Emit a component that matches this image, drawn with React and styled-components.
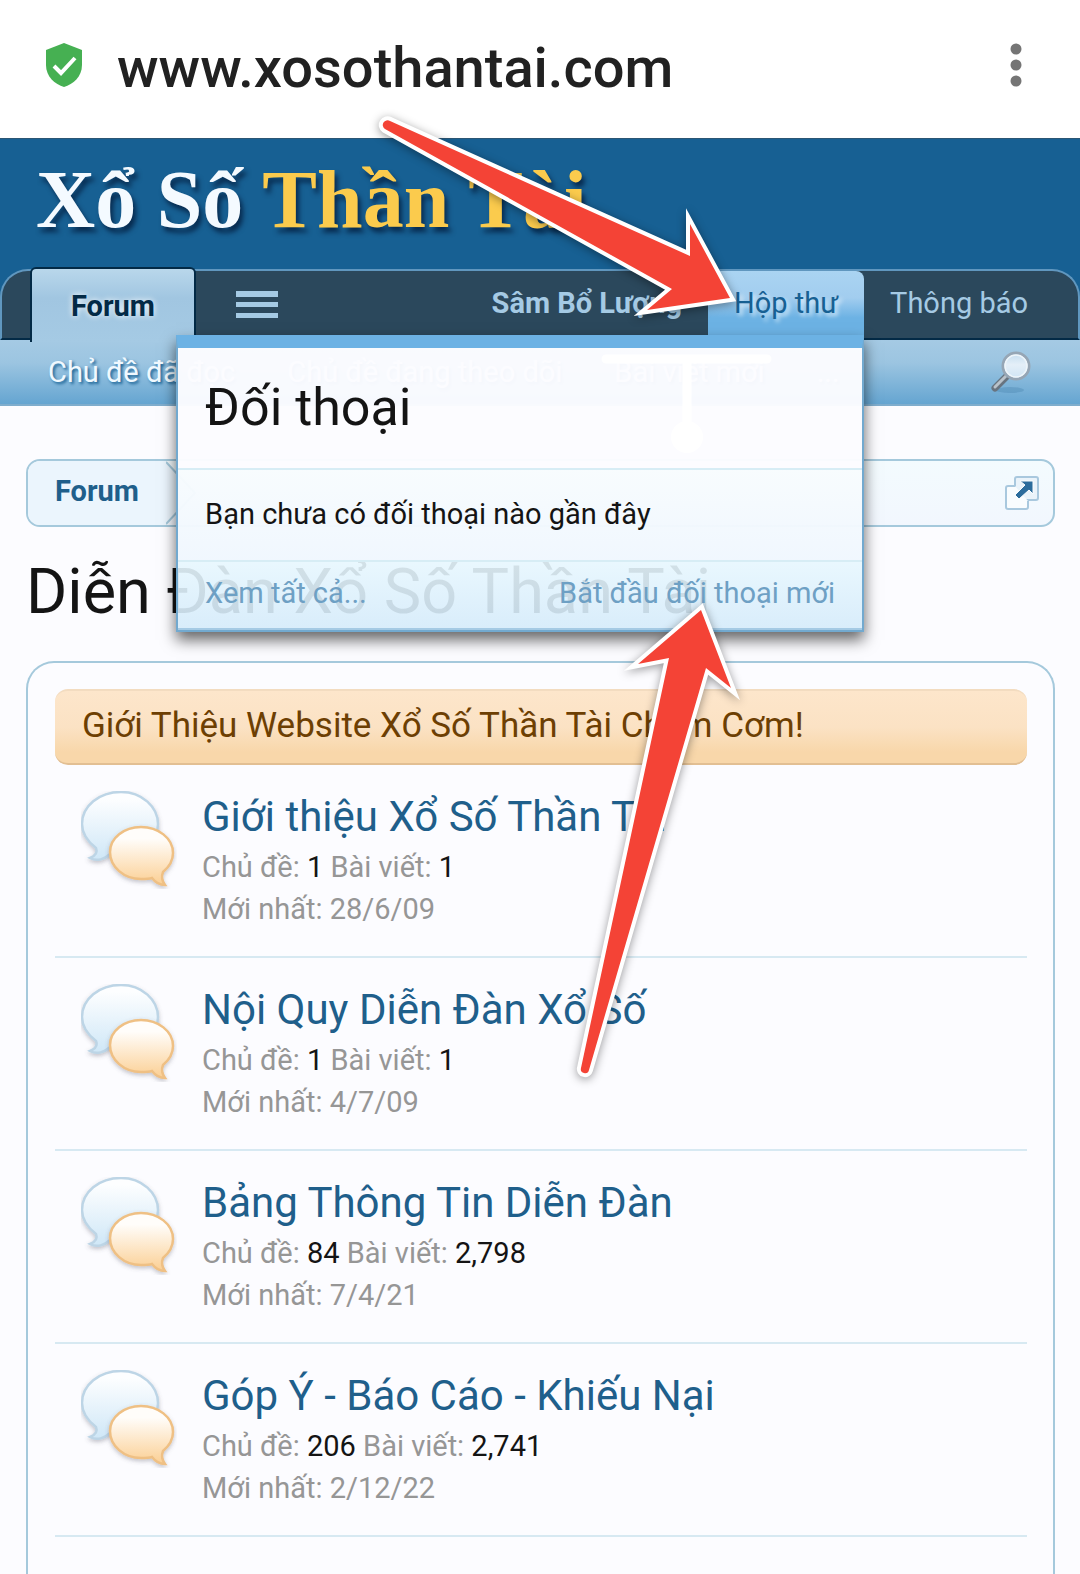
import React from 'react'
import styled, { createGlobalStyle } from 'styled-components'

const forums = [
	{ title: 'Giới thiệu Xổ Số Thần Tài', topics: '1', posts: '1', latest: '28/6/09' },
	{ title: 'Nội Quy Diễn Đàn Xổ Số', topics: '1', posts: '1', latest: '4/7/09' },
	{ title: 'Bảng Thông Tin Diễn Đàn', topics: '84', posts: '2,798', latest: '7/4/21' },
	{ title: 'Góp Ý - Báo Cáo - Khiếu Nại', topics: '206', posts: '2,741', latest: '2/12/22' },
]

const subLinks = ['Chủ đề đã đọc', 'Chủ đề đang theo dõi', 'Bài viết mới', '...']

const ShieldIcon = () => (
	<svg width='36' height='44' viewBox='0 0 36 44' aria-hidden='true'>
		<path d='M18 0 36 7v15c0 12-9 19-18 22C9 41 0 34 0 22V7z' fill='#46b052' />
		<path d='m8 23 7 7 14-15' fill='none' stroke='#fff' strokeWidth='4' />
	</svg>
)

const DotsIcon = () => (
	<svg width='12' height='44' viewBox='0 0 12 44' fill='#757575' aria-hidden='true'>
		<circle cx='6' cy='6' r='5.5' />
		<circle cx='6' cy='22' r='5.5' />
		<circle cx='6' cy='38' r='5.5' />
	</svg>
)

const MenuIcon = () => (
	<svg width='42' height='28' viewBox='0 0 42 28' fill='#a5cae4' aria-hidden='true'>
		<path d='M0 0h42v6H0zM0 11h42v5H0zM0 22h42v5H0z' />
	</svg>
)

const SearchIcon = () => (
	<svg width='42' height='44' viewBox='0 0 42 44' aria-hidden='true'>
		<defs>
			<linearGradient id='lens' x1='0' y1='0' x2='0' y2='1'>
				<stop offset='0' stopColor='#c3dcef' />
				<stop offset='0.45' stopColor='#e4eff8' />
				<stop offset='1' stopColor='#cfe4f4' />
			</linearGradient>
		</defs>
		<ellipse cx='20' cy='40' rx='14' ry='3' fill='#3f7ba6' opacity='0.3' />
		<path d='M17 26 5 38' stroke='#687480' strokeWidth='7' strokeLinecap='round' />
		<path d='M16 26 5 37' stroke='#b9c2ca' strokeWidth='3' strokeLinecap='round' />
		<circle cx='26' cy='16' r='13' fill='url(#lens)' stroke='#96a6b5' strokeWidth='3' />
		<circle cx='26' cy='16' r='11' fill='none' stroke='#eef5fa' strokeWidth='1.5' />
	</svg>
)

const JumpIcon = () => (
	<svg width='34' height='36' viewBox='0 0 34 36' aria-hidden='true'>
		<path d='M12 2h19q2 0 2 2v19q0 2-2 2H12q-2 0-2-2V4q0-2 2-2z' fill='#eaf3fa' stroke='#a9c8de' strokeWidth='2' />
		<path d='M10 11H3q-2 0-2 2v19q0 2 2 2h18q2 0 2-2v-6' fill='#f9fcfe' stroke='#a9c8de' strokeWidth='2' />
		<path d='M15 6h13v13l-4-4-10 9-4-4 10-10z' fill='#2c6c9c' stroke='#f9fcfe' strokeWidth='1' />
	</svg>
)

const BubblesIcon = () => (
	<svg width='96' height='98' viewBox='0 0 96 98' aria-hidden='true'>
		<defs>
			<linearGradient id='blueBubble' x1='0' y1='0' x2='0' y2='1'>
				<stop offset='0.1' stopColor='#fdfeff' />
				<stop offset='1' stopColor='#cfe7f7' />
			</linearGradient>
			<linearGradient id='orangeBubble' x1='0' y1='0' x2='0' y2='1'>
				<stop offset='0.2' stopColor='#fffdfa' />
				<stop offset='1' stopColor='#fbcf93' />
			</linearGradient>
			<filter id='bubbleShadow' x='-20%' y='-20%' width='140%' height='140%'>
				<feDropShadow dx='0' dy='2' stdDeviation='2' floodColor='#556' floodOpacity='0.35' />
			</filter>
		</defs>
		<path
			d='M40 1C18 1 1 15 1 33c0 10 5 17 14 24 2 5-1 8-6 10 7 4 15 1 20-4 3 1 7 1 11 1 21 0 37-14 37-31S61 1 40 1z'
			fill='url(#blueBubble)'
			stroke='#bdd5e6'
			strokeWidth='2.5'
			filter='url(#bubbleShadow)'
		/>
		<path
			d='M60 36c-17 0-31 11-31 25 0 15 14 27 31 27 4 0 8 0 11-1 3 4 7 7 13 7-3-4-4-8-2-13 6-5 10-12 10-19 0-15-15-26-32-26z'
			fill='url(#orangeBubble)'
			stroke='#efc084'
			strokeWidth='2.5'
			filter='url(#bubbleShadow)'
		/>
	</svg>
)

const ForumRow = ({ title, topics, posts, latest }) => (
	<Row>
		<BubblesIcon />
		<RowText>
			<RowTitle>
				<a href='#forum'>{title}</a>
			</RowTitle>
			<Stat>
				Chủ đề: <b>{topics}</b> Bài viết: <b>{posts}</b>
			</Stat>
			<Stat>Mới nhất: {latest}</Stat>
		</RowText>
	</Row>
)

export default function App() {
	return (
		<Page>
			<GlobalStyle />
			<BrowserBar>
				<ShieldIcon />
				<Address>www.xosothantai.com</Address>
				<IconButton type='button' aria-label='Menu'>
					<DotsIcon />
				</IconButton>
			</BrowserBar>

			<Header>
				<Logo href='#home'>
					Xổ Số <span>Thần Tài</span>
				</Logo>
				<NavBar>
					<ForumTab href='#forum'>Forum</ForumTab>
					<MenuButton type='button' aria-label='Danh mục'>
						<MenuIcon />
					</MenuButton>
					<NavLink href='#account' $bold>
						Sâm Bổ Lượng
					</NavLink>
					<Inbox>
						<InboxTab href='#inbox'>Hộp thư</InboxTab>
						<Popup>
							<PopupHead>
								<h3>Đối thoại</h3>
								<DragMark viewBox='0 0 172 104' aria-hidden='true'>
									<path d='M5 6h161M86 6v76' stroke='#fff' strokeWidth='9' strokeLinecap='round' />
									<circle cx='86' cy='84' r='16' fill='#fff' />
								</DragMark>
							</PopupHead>
							<PopupBody>Bạn chưa có đối thoại nào gần đây</PopupBody>
							<PopupFoot>
								<a href='#all'>Xem tất cả...</a>
								<a href='#new'>Bắt đầu đối thoại mới</a>
							</PopupFoot>
						</Popup>
					</Inbox>
					<NavLink href='#alerts'>Thông báo</NavLink>
				</NavBar>
				<SubNav>
					{subLinks.map(link => (
						<a href='#sub' key={link}>
							{link}
						</a>
					))}
					<IconButton type='button' aria-label='Tìm kiếm'>
						<SearchIcon />
					</IconButton>
				</SubNav>
			</Header>

			<Content>
				<Breadcrumb>
					<Crumb href='#forum'>Forum</Crumb>
					<CrumbArrow width='30' height='64' viewBox='0 0 30 64' aria-hidden='true'>
						<path d='M0 0 29 32 0 64z' fill='#ebf5fd' />
						<path d='M0 1 29 32 0 63' fill='none' stroke='#a5c9dc' strokeWidth='2' />
					</CrumbArrow>
					<IconButton type='button' aria-label='Mở nhanh'>
						<JumpIcon />
					</IconButton>
				</Breadcrumb>
				<PageTitle>Diễn Đàn Xổ Số Thần Tài</PageTitle>
				<Board>
					<Category>Giới Thiệu Website Xổ Số Thần Tài Chấm Cơm!</Category>
					<RowList>
						{forums.map(forum => (
							<ForumRow key={forum.title} {...forum} />
						))}
					</RowList>
				</Board>
			</Content>

			<Arrow $top={100} $left={360} width='400' height='240' viewBox='360 100 400 240' aria-hidden='true'>
				<path d='M390 121 690 256V224L730 298 647 310 672 289 385 129A4 4 0 0 1 390 121z' />
			</Arrow>
			<Arrow $top={590} $left={560} width='210' height='510' viewBox='560 590 210 510' aria-hidden='true'>
				<path d='M701 610 638 664 669 658 581 1068A4 4 0 0 0 589 1070L706 668 731 688z' />
			</Arrow>
		</Page>
	)
}

const GlobalStyle = createGlobalStyle`
	* {
		box-sizing: border-box;
	}
	body {
		margin: 0;
		background: #fcfcff;
		color: #141414;
		font: 29px/42px Roboto, 'Noto Sans', sans-serif;
	}
	a {
		color: inherit;
		text-decoration: none;
	}
	h1,
	h2,
	h3,
	p,
	ul {
		margin: 0;
		padding: 0;
		font-weight: 400;
	}
`

const Page = styled.div`
	position: relative;
	display: flex;
	flex-direction: column;
	min-height: 100vh;
`

const IconButton = styled.button`
	display: flex;
	margin-left: auto;
	padding: 0;
	border: 0;
	background: none;
	cursor: pointer;
`

const BrowserBar = styled.div`
	display: flex;
	align-items: center;
	height: 138px;
	padding: 0 58px 8px 46px;
	background: #fff;
`

const Address = styled.span`
	padding: 6px 0 0 35px;
	color: #212121;
	font-size: 56px;
	font-weight: 500;
	line-height: 70px;
`

const Header = styled.header`
	background: #176093;
	border-top: 1px solid #2c5674;
`

const Logo = styled.a`
	display: block;
	height: 130px;
	padding: 13px 36px 0;
	color: #f4faff;
	font: bold 82px/96px 'Liberation Serif', serif;
	text-shadow: 3px 5px 5px rgba(0, 20, 50, 0.7);
	span {
		color: #fbcb4d;
	}
`

const NavBar = styled.nav`
	position: relative;
	z-index: 2;
	display: flex;
	height: 71px;
	padding: 0 24px 0 28px;
	background: #2b485c;
	border: 2px solid #6097bf;
	border-bottom-color: #032a46;
	border-radius: 28px 28px 0 0;
`

const ForumTab = styled.a`
	width: 166px;
	height: 75px;
	margin-top: -4px;
	border: 2px solid #032a46;
	border-bottom: 0;
	border-radius: 6px 6px 0 0;
	background: linear-gradient(#b9d7eb, #a1c6e1 40%, #a5cae4);
	color: #032a46;
	font-weight: 700;
	line-height: 74px;
	text-align: center;
	text-shadow: 0 0 6px #fff;
`

const MenuButton = styled(IconButton)`
	margin: 0 auto 0 0;
	padding: 20px 40px;
`

const NavLink = styled.a`
	padding: 0 26px;
	color: #a5cae4;
	font-weight: ${({ $bold }) => ($bold ? 700 : 400)};
	line-height: 64px;
`

const Inbox = styled.div`
	position: relative;
`

const InboxTab = styled.a`
	display: block;
	height: 67px;
	padding: 0 26px;
	border-radius: 0 8px 0 0;
	background: linear-gradient(#aad4f2, #a2cdef 40%, #6cb2e4 70%);
	color: #176093;
	line-height: 64px;
	text-shadow: 3px 3px 4px rgba(255, 255, 255, 0.7);
`

const Popup = styled.section`
	position: absolute;
	top: 64px;
	right: 0;
	width: 688px;
	border: 2px solid #72a9cf;
	border-top: 13px solid #6cb2e4;
	box-shadow: 0 8px 14px rgba(0, 0, 0, 0.6);
`

const PopupHead = styled.div`
	position: relative;
	padding: 28px 27px;
	border-bottom: 2px solid #d7edf5;
	background: rgba(252, 252, 255, 0.97);
	h3 {
		font-size: 52px;
		line-height: 64px;
	}
`

const DragMark = styled.svg`
	position: absolute;
	top: 5px;
	right: 89px;
	width: 172px;
`

const PopupBody = styled.p`
	padding: 23px 27px 25px;
	background: linear-gradient(rgba(248, 252, 254, 0.97), rgba(240, 247, 254, 0.97));
`

const PopupFoot = styled.div`
	display: flex;
	justify-content: space-between;
	padding: 10px 27px 14px;
	border-top: 2px solid #d7edf5;
	border-bottom: 2px solid #a5cae4;
	background: linear-gradient(rgba(231, 247, 254, 0.9), rgba(213, 235, 250, 0.9));
	color: #6ea0c4;
`

const SubNav = styled.div`
	display: flex;
	align-items: center;
	gap: 52px;
	height: 66px;
	padding: 0 48px;
	background: linear-gradient(#a5cae4, #9cc5e1 35%, #65a5d1);
	border-bottom: 2px solid #7fadcd;
	color: #f0f9ff;
	text-shadow: 2px 2px 3px #176093;
`

const Content = styled.main`
	display: flex;
	flex: 1;
	flex-direction: column;
	padding: 53px 25px 0 26px;
`

const Breadcrumb = styled.nav`
	display: flex;
	align-items: center;
	height: 68px;
	padding-right: 14px;
	border: 2px solid #a5c9dc;
	border-radius: 14px;
	background: linear-gradient(#f3fbfe, #f2f7fe);
`

const Crumb = styled.a`
	padding: 9px 27px 13px;
	border-radius: 12px 0 0 12px;
	background: #ebf5fd;
	color: #1f5f8b;
	font-weight: 700;
`

const CrumbArrow = styled.svg`
	flex: none;
`

const PageTitle = styled.h1`
	padding: 24px 0 28px;
	font-size: 63px;
	line-height: 82px;
`

const Board = styled.section`
	flex: 1;
	padding: 26px 26px 0 27px;
	border: 2px solid #a5c9dc;
	border-bottom: 0;
	border-radius: 28px 28px 0 0;
`

const Category = styled.h2`
	padding: 15px 27px 17px;
	border-top: 2px solid #f3dcc0;
	border-bottom: 2px solid #e2bf93;
	border-radius: 13px;
	background: linear-gradient(#fde6cb, #fbe2c4 50%, #f8d7aa 85%);
	color: #6d3f03;
	font-size: 35px;
	line-height: 40px;
`

const RowList = styled.ul`
	list-style: none;
`

const Row = styled.li`
	display: flex;
	gap: 25px;
	min-height: 193px;
	padding: 26px 26px 0;
	border-bottom: 2px solid #d7e9f2;
`

const RowText = styled.div`
	flex: 1;
`

const RowTitle = styled.h3`
	padding-bottom: 3px;
	color: #1f5f8b;
	font-size: 42px;
	line-height: 52px;
`

const Stat = styled.p`
	color: #969696;
	b {
		color: #141414;
		font-weight: 400;
	}
`

const Arrow = styled.svg`
	position: absolute;
	z-index: 3;
	top: ${({ $top }) => $top}px;
	left: ${({ $left }) => $left}px;
	fill: #f44336;
	stroke: #fff;
	stroke-width: 8px;
	stroke-miterlimit: 10;
	paint-order: stroke;
	filter: drop-shadow(0 2px 5px rgba(0, 0, 0, 0.4));
	pointer-events: none;
`
